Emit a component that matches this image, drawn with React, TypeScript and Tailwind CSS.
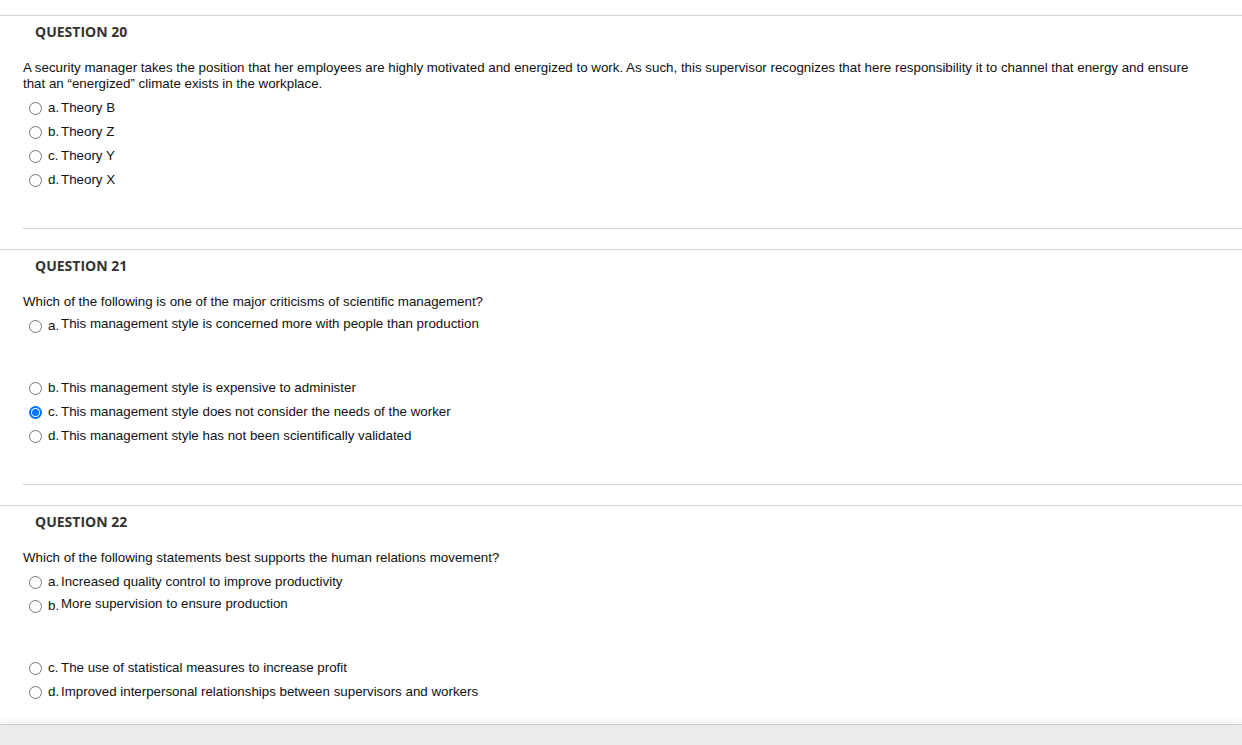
import React from "react";

type Opt = { letter: string; text: string; checked?: boolean; tall?: boolean };
type Q = { num: number; text: string; options: Opt[] };

const questions: Q[] = [
  {
    num: 20,
    text:
      "A security manager takes the position that her employees are highly motivated and energized to work. As such, this supervisor recognizes that here responsibility it to channel that energy and ensure that an \u201cenergized\u201d climate exists in the workplace.",
    options: [
      { letter: "a.", text: "Theory B" },
      { letter: "b.", text: "Theory Z" },
      { letter: "c.", text: "Theory Y" },
      { letter: "d.", text: "Theory X" },
    ],
  },
  {
    num: 21,
    text: "Which of the following is one of the major criticisms of scientific management?",
    options: [
      { letter: "a.", text: "This management style is concerned more with people than production", tall: true },
      { letter: "b.", text: "This management style is expensive to administer" },
      { letter: "c.", text: "This management style does not consider the needs of the worker", checked: true },
      { letter: "d.", text: "This management style has not been scientifically validated" },
    ],
  },
  {
    num: 22,
    text: "Which of the following statements best supports the human relations movement?",
    options: [
      { letter: "a.", text: "Increased quality control to improve productivity" },
      { letter: "b.", text: "More supervision to ensure production", tall: true },
      { letter: "c.", text: "The use of statistical measures to increase profit" },
      { letter: "d.", text: "Improved interpersonal relationships between supervisors and workers" },
    ],
  },
];

function Radio({ checked }: { checked?: boolean }) {
  if (checked) {
    return (
      <span className="flex h-[13px] w-[13px] shrink-0 items-center justify-center rounded-full bg-[#0075ff]">
        <span className="flex h-[9px] w-[9px] items-center justify-center rounded-full bg-white">
          <span className="h-[7px] w-[7px] rounded-full bg-[#0075ff]" />
        </span>
      </span>
    );
  }
  return <span className="block h-[13px] w-[13px] shrink-0 rounded-full border border-[#767676] bg-white" />;
}

function Option({ o }: { o: Opt }) {
  if (o.tall) {
    return (
      <div className="flex h-[62px] items-start pl-[6px]">
        <span className="mt-[6px]">
          <Radio checked={o.checked} />
        </span>
        <span className="ml-[6px] mt-[4px] w-[13px] leading-[16px]">{o.letter}</span>
        <span className="mt-[2px] leading-[16px]">{o.text}</span>
      </div>
    );
  }
  return (
    <div className="flex h-[24px] items-center pl-[6px]">
      <Radio checked={o.checked} />
      <span className="ml-[6px] w-[13px] leading-[16px]">{o.letter}</span>
      <span className="leading-[16px]">{o.text}</span>
    </div>
  );
}

function Question({ q, first }: { q: Q; first?: boolean }) {
  return (
    <section className={first ? "mt-[15px]" : "mt-[20px]"}>
      <div className="border-t border-[#d3d3d3]" />
      <h2
        className="mt-[7px] pl-[35px] text-[14px] font-bold leading-[18px] text-[#333333]"
        style={{ fontFamily: '"Open Sans", sans-serif' }}
      >
        QUESTION {q.num}
      </h2>
      <div className="pl-[23px]">
        <p className="mt-[19px] w-[1180px] leading-[16px]">{q.text}</p>
        <div className="mt-[4px]">
          {q.options.map((o) => (
            <Option key={o.letter} o={o} />
          ))}
        </div>
        <div className="mt-[36px] border-t border-[#d3d3d3]" />
      </div>
    </section>
  );
}

export default function App() {
  return (
    <div
      className="flex h-[745px] w-[1242px] flex-col overflow-hidden bg-white text-[13.33px] text-[#111111]"
      style={{ fontFamily: '"Liberation Sans", Arial, sans-serif' }}
    >
      <main className="min-h-0 flex-1 overflow-hidden">
        {questions.map((q, i) => (
          <Question key={q.num} q={q} first={i === 0} />
        ))}
      </main>
      <footer className="relative h-[21px] shrink-0 border-t border-[#cfcfcf] bg-[#ebebeb] shadow-[0_-4px_5px_rgba(0,0,0,0.05)]" />
    </div>
  );
}
